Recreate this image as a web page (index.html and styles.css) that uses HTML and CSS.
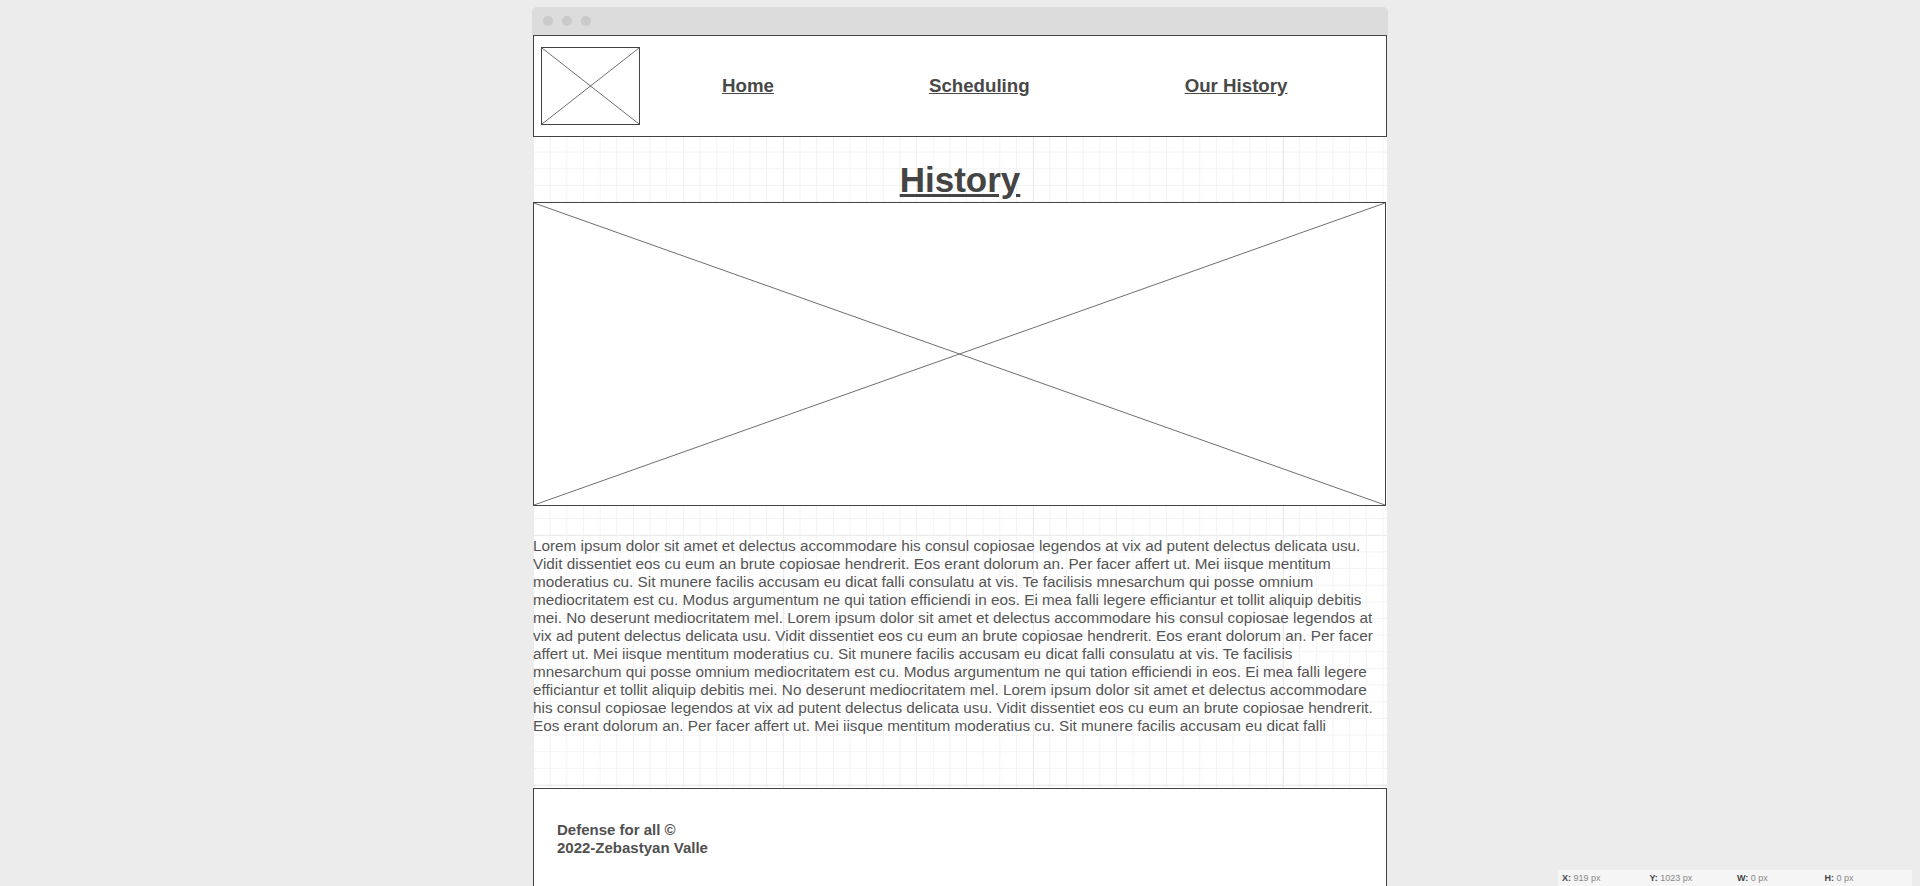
FILE: index.html
```html
<!DOCTYPE html>
<html lang="en">
<head>
<meta charset="utf-8">
<title>History</title>
<link rel="stylesheet" href="styles.css">
</head>
<body>
<div class="frame">
  <div class="chrome">
    <span class="dot"></span><span class="dot"></span><span class="dot"></span>
  </div>
  <div class="canvas">
    <header class="header">
      <div class="logo">
        <svg class="xsvg" viewBox="0 0 100 100" preserveAspectRatio="none"><line x1="0" y1="0" x2="100" y2="100"/><line x1="100" y1="0" x2="0" y2="100"/></svg>
      </div>
      <nav class="nav">
        <a href="#" class="nav-link">Home</a>
        <a href="#" class="nav-link">Scheduling</a>
        <a href="#" class="nav-link">Our History</a>
      </nav>
    </header>
    <h1 class="title">History</h1>
    <div class="hero">
      <svg class="xsvg" viewBox="0 0 100 100" preserveAspectRatio="none"><line x1="0" y1="0" x2="100" y2="100"/><line x1="100" y1="0" x2="0" y2="100"/></svg>
    </div>
    <p class="body-text">Lorem ipsum dolor sit amet et delectus accommodare his consul copiosae legendos at vix ad putent delectus delicata usu. Vidit dissentiet eos cu eum an brute copiosae hendrerit. Eos erant dolorum an. Per facer affert ut. Mei iisque mentitum moderatius cu. Sit munere facilis accusam eu dicat falli consulatu at vis. Te facilisis mnesarchum qui posse omnium mediocritatem est cu. Modus argumentum ne qui tation efficiendi in eos. Ei mea falli legere efficiantur et tollit aliquip debitis mei. No deserunt mediocritatem mel. Lorem ipsum dolor sit amet et delectus accommodare his consul copiosae legendos at vix ad putent delectus delicata usu. Vidit dissentiet eos cu eum an brute copiosae hendrerit. Eos erant dolorum an. Per facer affert ut. Mei iisque mentitum moderatius cu. Sit munere facilis accusam eu dicat falli consulatu at vis. Te facilisis mnesarchum qui posse omnium mediocritatem est cu. Modus argumentum ne qui tation efficiendi in eos. Ei mea falli legere efficiantur et tollit aliquip debitis mei. No deserunt mediocritatem mel. Lorem ipsum dolor sit amet et delectus accommodare his consul copiosae legendos at vix ad putent delectus delicata usu. Vidit dissentiet eos cu eum an brute copiosae hendrerit. Eos erant dolorum an. Per facer affert ut. Mei iisque mentitum moderatius cu. Sit munere facilis accusam eu dicat falli</p>
    <footer class="footer">
      <p class="footer-text">Defense for all ©<br>2022-Zebastyan Valle</p>
    </footer>
  </div>
</div>
<div class="status">
  <span class="stat"><b>X:</b> 919 px</span>
  <span class="stat"><b>Y:</b> 1023 px</span>
  <span class="stat"><b>W:</b> 0 px</span>
  <span class="stat"><b>H:</b> 0 px</span>
</div>
</body>
</html>
```

FILE: styles.css
```css
* { box-sizing: border-box; }

html, body {
  margin: 0;
  padding: 0;
  height: 100%;
  overflow: hidden;
}

body {
  background: #ececec;
  font-family: "Liberation Sans", Arial, sans-serif;
  color: #444;
}

.frame {
  width: 854px;
  margin: 7px auto 0;
}

.chrome {
  margin: 0 -1px;
  height: 28px;
  background: #dcdcdc;
  border-radius: 5px 5px 0 0;
  display: flex;
  align-items: center;
  gap: 9px;
  padding: 0 0 0 11px;
}

.dot {
  width: 10px;
  height: 10px;
  border-radius: 50%;
  background: #cacaca;
}

.canvas {
  background-color: #fff;
  background-image:
    linear-gradient(to right, #ebebeb 1px, transparent 1px),
    linear-gradient(to bottom, #ebebeb 1px, transparent 1px),
    linear-gradient(to right, #f3f3f3 1px, transparent 1px),
    linear-gradient(to bottom, #f3f3f3 1px, transparent 1px);
  background-size: 250px 250px, 250px 250px, 16.667px 16.667px, 16.667px 16.667px;
  min-height: 900px;
}

.header {
  height: 102px;
  border: 1px solid #444;
  background: #fff;
  display: flex;
  align-items: center;
  padding-left: 7px;
}

.logo {
  width: 99px;
  height: 78px;
  border: 1px solid #444;
  flex: none;
}

.xsvg {
  display: block;
  width: 100%;
  height: 100%;
}

.xsvg line {
  stroke: #6f6f6f;
  stroke-width: 1;
  vector-effect: non-scaling-stroke;
}

.nav {
  display: flex;
  gap: 155px;
  margin-left: 82px;
}

.nav-link {
  font-size: 18.7px;
  font-weight: bold;
  color: #484848;
  text-decoration: underline;
}

.title {
  margin: 23px 0 2px;
  text-align: center;
  font-size: 35px;
  line-height: 40px;
  font-weight: bold;
  text-decoration: underline;
  color: #444;
}

.hero {
  width: 853px;
  height: 304px;
  border: 1px solid #444;
  background: #fff;
}

.body-text {
  width: 848px;
  margin: 31px 0 0;
  font-size: 15.3px;
  line-height: 18px;
  color: #555;
}

.footer {
  margin-top: 53px;
  height: 140px;
  border: 1px solid #444;
  background: #fff;
  padding: 32px 23px 0;
}

.footer-text {
  margin: 0;
  font-size: 15px;
  line-height: 18px;
  font-weight: bold;
  color: #505050;
}

.status {
  position: fixed;
  right: 8px;
  bottom: 0;
  width: 354px;
  height: 16px;
  background: #f5f5f5;
  display: flex;
  align-items: center;
  padding-left: 4px;
  font-size: 9px;
  color: #888;
}

.stat {
  width: 88.5px;
}

.stat b {
  color: #444;
}
```
